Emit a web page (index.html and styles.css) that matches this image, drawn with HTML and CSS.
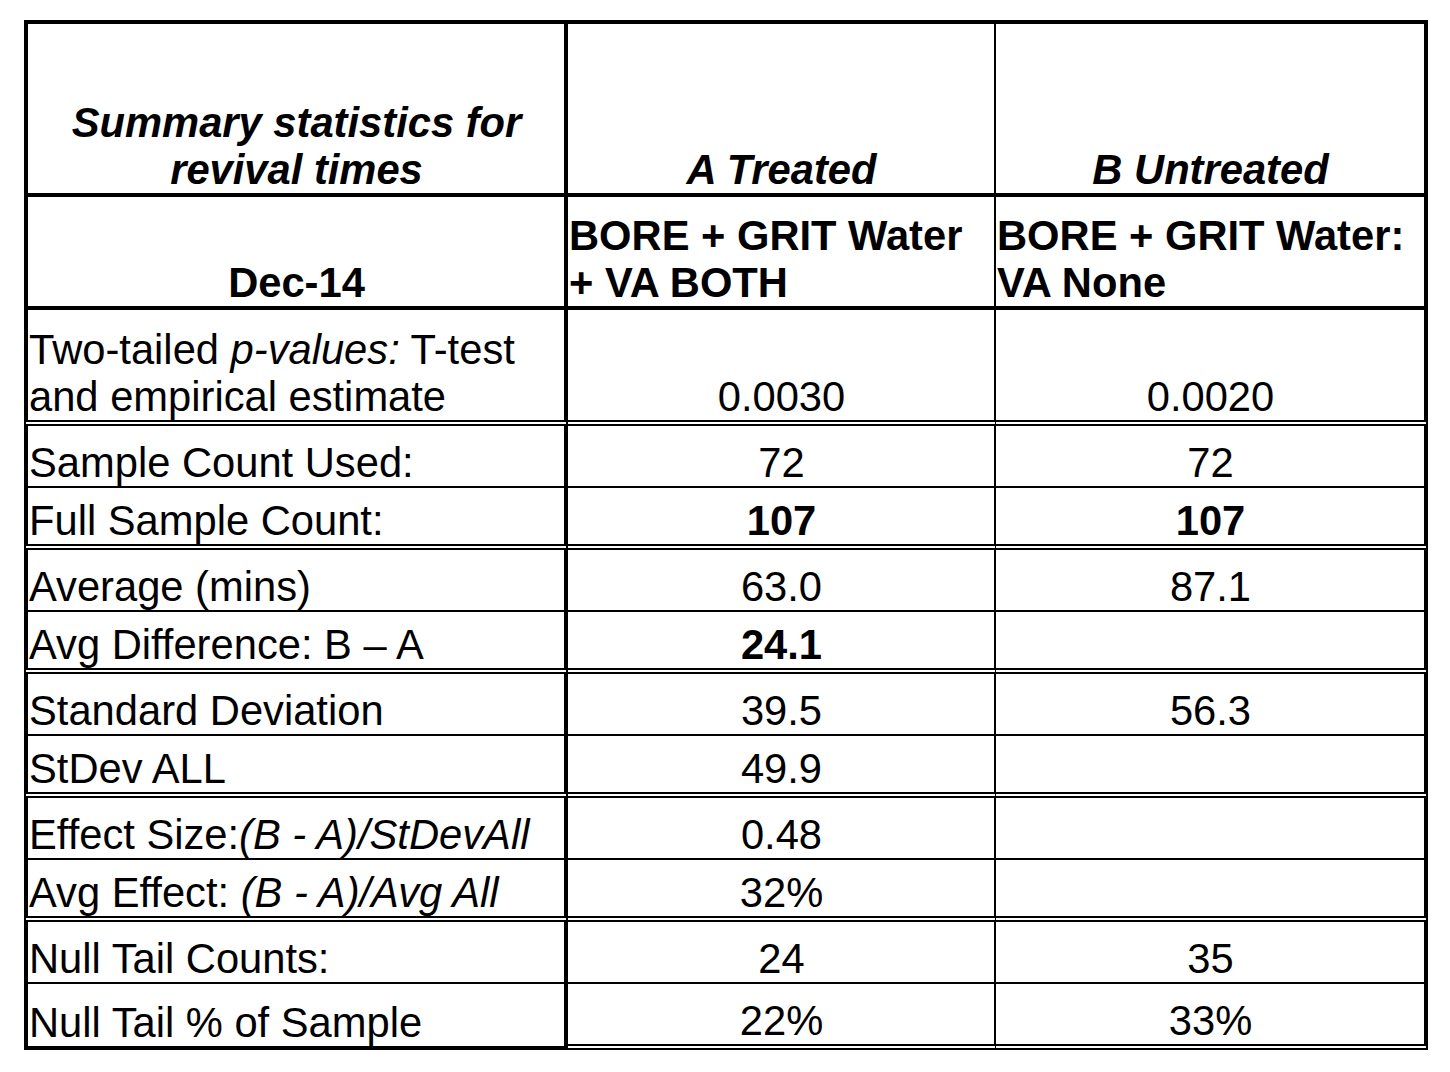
FILE: index.html
```html
<!DOCTYPE html>
<html lang="en">
<head>
<meta charset="utf-8">
<title>Summary statistics for revival times</title>
<link rel="stylesheet" href="styles.css">
</head>
<body>
<table class="stats">
  <tr class="r-h1">
    <th class="c1 center"><em>Summary statistics for<br>revival times</em></th>
    <th class="c2 center"><em>A Treated</em></th>
    <th class="c3 center"><em>B Untreated</em></th>
  </tr>
  <tr class="r-h2">
    <th class="c1 center">Dec-14</th>
    <th class="c2 left">BORE + GRIT Water<br>+ VA BOTH</th>
    <th class="c3 left">BORE + GRIT Water:<br>VA None</th>
  </tr>
  <tr class="r-pv dbl">
    <td class="c1">Two-tailed <em>p-values:</em> T-test<br>and empirical estimate</td>
    <td class="c2">0.0030</td>
    <td class="c3">0.0020</td>
  </tr>
  <tr class="r-a">
    <td class="c1">Sample Count Used:</td>
    <td class="c2">72</td>
    <td class="c3">72</td>
  </tr>
  <tr class="r-b dbl">
    <td class="c1">Full Sample Count:</td>
    <td class="c2"><b>107</b></td>
    <td class="c3"><b>107</b></td>
  </tr>
  <tr class="r-a">
    <td class="c1">Average (mins)</td>
    <td class="c2">63.0</td>
    <td class="c3">87.1</td>
  </tr>
  <tr class="r-b dbl">
    <td class="c1">Avg Difference: B &ndash; A</td>
    <td class="c2"><b>24.1</b></td>
    <td class="c3"></td>
  </tr>
  <tr class="r-a">
    <td class="c1">Standard Deviation</td>
    <td class="c2">39.5</td>
    <td class="c3">56.3</td>
  </tr>
  <tr class="r-b dbl">
    <td class="c1">StDev ALL</td>
    <td class="c2">49.9</td>
    <td class="c3"></td>
  </tr>
  <tr class="r-a">
    <td class="c1">Effect Size:<em>(B - A)/StDevAll</em></td>
    <td class="c2">0.48</td>
    <td class="c3"></td>
  </tr>
  <tr class="r-b dbl">
    <td class="c1">Avg Effect: <em>(B - A)/Avg All</em></td>
    <td class="c2">32%</td>
    <td class="c3"></td>
  </tr>
  <tr class="r-a">
    <td class="c1">Null Tail Counts:</td>
    <td class="c2">24</td>
    <td class="c3">35</td>
  </tr>
  <tr class="r-last">
    <td class="c1">Null Tail % of Sample</td>
    <td class="c2">22%</td>
    <td class="c3">33%</td>
  </tr>
</table>
</body>
</html>
```

FILE: styles.css
```css
html, body {
  margin: 0;
  padding: 0;
  background: #fff;
}

body {
  padding: 20px 0 0 24px;
  font-family: "Liberation Sans", Arial, sans-serif;
  color: #000;
}

.stats {
  border-collapse: separate;
  border-spacing: 0;
  table-layout: fixed;
  width: 1404px;
  font-size: 41.7px;
  line-height: 47px;
}

.stats th,
.stats td {
  padding: 0 0 0 1px;
  vertical-align: bottom;
  white-space: nowrap;
  overflow: hidden;
  box-sizing: content-box;
  font-weight: normal;
  text-align: center;
}

.stats th {
  font-weight: bold;
}

.stats em {
  font-style: italic;
}

.stats b {
  font-weight: bold;
}

/* columns */
.stats .c1 {
  width: 535px;
  border-left: 4px solid #000;
  border-right: 4px solid #000;
  text-align: left;
}

.stats .c2 {
  width: 425px;
  border-right: 2px solid #000;
}

.stats .c3 {
  width: 427px;
  border-right: 4px solid #000;
}

.stats .center {
  text-align: center;
}

.stats .left {
  text-align: left;
}

/* rows */
.r-h1 th {
  height: 169px;
  border-top: 4px solid #000;
  border-bottom: 4px solid #000;
}

.r-h2 th {
  height: 109px;
  border-bottom: 4px solid #000;
}

.r-pv td {
  height: 110px;
}

.r-a td {
  height: 60px;
  border-bottom: 2px solid #000;
}

.r-b td {
  height: 56px;
}

.dbl td {
  border-bottom: 6px double #000;
}

.r-last td {
  height: 60px;
  border-bottom: 6px double #000;
}

.r-last td.c1 {
  height: 62px;
  border-bottom: 4px solid #000;
}
```
